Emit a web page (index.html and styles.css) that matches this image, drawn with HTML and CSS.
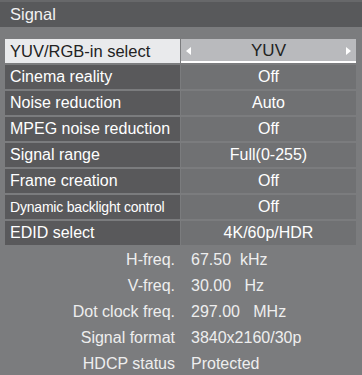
FILE: index.html
```html
<!DOCTYPE html>
<html lang="en">
<head>
    <meta charset="UTF-8">
    <title>Signal</title>
    <link rel="stylesheet" href="styles.css">
</head>
<body>
    <div class="panel">
        <div class="title-bar">Signal</div>

        <div class="menu">
            <div class="menu-row selected">
                <div class="menu-label">YUV/RGB-in select</div>
                <div class="menu-value">
                    <span class="arrow arrow-left"></span>
                    YUV
                    <span class="arrow arrow-right"></span>
                </div>
            </div>
            <div class="menu-row">
                <div class="menu-label">Cinema reality</div>
                <div class="menu-value">Off</div>
            </div>
            <div class="menu-row">
                <div class="menu-label">Noise reduction</div>
                <div class="menu-value">Auto</div>
            </div>
            <div class="menu-row">
                <div class="menu-label">MPEG noise reduction</div>
                <div class="menu-value">Off</div>
            </div>
            <div class="menu-row">
                <div class="menu-label">Signal range</div>
                <div class="menu-value">Full(0-255)</div>
            </div>
            <div class="menu-row">
                <div class="menu-label">Frame creation</div>
                <div class="menu-value">Off</div>
            </div>
            <div class="menu-row">
                <div class="menu-label small">Dynamic backlight control</div>
                <div class="menu-value">Off</div>
            </div>
            <div class="menu-row">
                <div class="menu-label">EDID select</div>
                <div class="menu-value">4K/60p/HDR</div>
            </div>
        </div>

        <div class="info">
            <div class="info-label">H-freq.</div>
            <div class="info-value">67.50  kHz</div>
            <div class="info-label">V-freq.</div>
            <div class="info-value">30.00   Hz</div>
            <div class="info-label">Dot clock freq.</div>
            <div class="info-value">297.00   MHz</div>
            <div class="info-label">Signal format</div>
            <div class="info-value">3840x2160/30p</div>
            <div class="info-label">HDCP status</div>
            <div class="info-value">Protected</div>
        </div>
    </div>
</body>
</html>
```

FILE: styles.css
```css
body {
    margin: 0;
    padding: 0;
    background-color: #7b7c7e;
    font-family: 'Liberation Sans', Arial, sans-serif;
}
.panel {
    width: 362px;
    height: 375px;
    overflow: hidden;
}
.title-bar {
    height: 25px;
    border-top: 2px solid #67686a;
    background-color: #58595b;
    color: #f2f2f2;
    font-size: 16.5px;
    line-height: 25px;
    padding-left: 10px;
}
.menu {
    display: flex;
    flex-direction: column;
    gap: 2px;
    padding: 12px 6px 0 5px;
}
.menu-row {
    display: grid;
    grid-template-columns: 175px 175px;
    column-gap: 1px;
    height: 24px;
}
.menu-label {
    background-color: #59595b;
    color: #ffffff;
    font-size: 16px;
    line-height: 24px;
    padding-left: 5px;
    white-space: nowrap;
}
.menu-label.small {
    font-size: 14px;
    letter-spacing: -0.2px;
}
.menu-value {
    position: relative;
    background-color: #707173;
    color: #ffffff;
    font-size: 16px;
    line-height: 24px;
    text-align: center;
}
.menu-row.selected .menu-label {
    background-color: #e9eaec;
    color: #222222;
    font-size: 16.5px;
}
.menu-row.selected .menu-value {
    background-color: #b9babd;
    color: #222222;
    font-size: 17px;
    box-shadow: inset 0 -2px 0 #ffffff;
}
.arrow {
    position: absolute;
    top: 8px;
    width: 0;
    height: 0;
    border-top: 4px solid transparent;
    border-bottom: 4px solid transparent;
}
.arrow-left {
    left: 5px;
    border-right: 5px solid #ffffff;
}
.arrow-right {
    right: 5px;
    border-left: 5px solid #ffffff;
}
.info {
    display: grid;
    grid-template-columns: 175px 1fr;
    column-gap: 16px;
    grid-auto-rows: 26px;
    padding-top: 2px;
    color: #eeeeee;
    font-size: 16px;
    line-height: 26px;
}
.info-label {
    text-align: right;
}
.info-value {
    white-space: pre;
}
```
